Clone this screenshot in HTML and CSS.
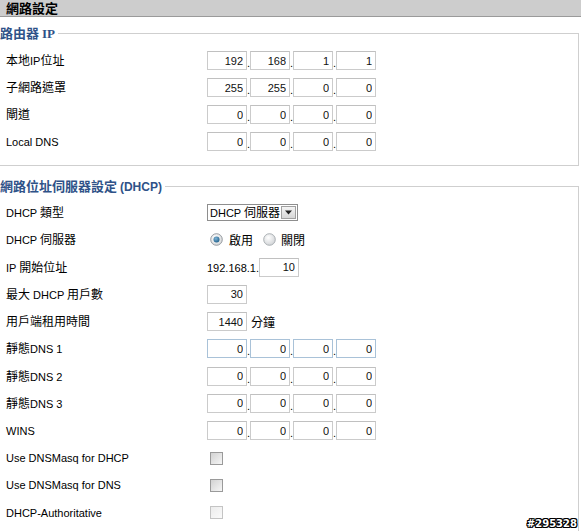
FILE: index.html
```html
<!DOCTYPE html>
<html>
<head>
<meta charset="utf-8">
<link rel="stylesheet" href="styles.css">
</head>
<body>
<div class="header"><span class="title">網路設定</span></div>

<fieldset class="group g1">
  <legend>路由器 <span class="serif">IP</span></legend>
  <div class="row"><div class="label"><span class="zh">本地</span>IP<span class="zh">位址</span></div>
    <div class="ip"><input class="box" value="192"><span class="dot">.</span><input class="box" value="168"><span class="dot">.</span><input class="box" value="1"><span class="dot">.</span><input class="box" value="1"></div></div>
  <div class="row"><div class="label"><span class="zh">子網路遮罩</span></div>
    <div class="ip"><input class="box" value="255"><span class="dot">.</span><input class="box" value="255"><span class="dot">.</span><input class="box" value="0"><span class="dot">.</span><input class="box" value="0"></div></div>
  <div class="row"><div class="label"><span class="zh">閘道</span></div>
    <div class="ip"><input class="box" value="0"><span class="dot">.</span><input class="box" value="0"><span class="dot">.</span><input class="box" value="0"><span class="dot">.</span><input class="box" value="0"></div></div>
  <div class="row"><div class="label">Local DNS</div>
    <div class="ip"><input class="box" value="0"><span class="dot">.</span><input class="box" value="0"><span class="dot">.</span><input class="box" value="0"><span class="dot">.</span><input class="box" value="0"></div></div>
</fieldset>

<fieldset class="group g2">
  <legend>網路位址伺服器設定 <span class="paren">(DHCP)</span></legend>
  <div class="row"><div class="label">DHCP <span class="zh">類型</span></div>
    <div class="select"><span class="sel-text">DHCP <span class="zh">伺服器</span></span><span class="sel-btn"><svg width="9" height="5" viewBox="0 0 9 5"><path d="M1 0.5h7L4.5 4.5z" fill="#222"/></svg></span></div></div>
  <div class="row"><div class="label">DHCP <span class="zh">伺服器</span></div>
    <div class="radios">
      <svg class="radio" width="13" height="13" viewBox="0 0 13 13"><defs><radialGradient id="rg1" cx="0.4" cy="0.35" r="0.7"><stop offset="0" stop-color="#ffffff"/><stop offset="1" stop-color="#d4d6d8"/></radialGradient><radialGradient id="rd" cx="0.4" cy="0.35" r="0.7"><stop offset="0" stop-color="#7fb4d6"/><stop offset="1" stop-color="#1e5f8a"/></radialGradient></defs><circle cx="6.5" cy="6.5" r="5.8" fill="url(#rg1)" stroke="#8b9197" stroke-width="0.9"/><circle cx="6.5" cy="6.5" r="3" fill="url(#rd)"/></svg>
      <span class="zh rtext">啟用</span>
      <svg class="radio r2" width="13" height="13" viewBox="0 0 13 13"><defs><radialGradient id="rg2" cx="0.4" cy="0.35" r="0.7"><stop offset="0" stop-color="#ffffff"/><stop offset="1" stop-color="#cfd2d5"/></radialGradient></defs><circle cx="6.5" cy="6.5" r="5.8" fill="url(#rg2)" stroke="#a3a8ad" stroke-width="0.9"/></svg>
      <span class="zh rtext">關閉</span>
    </div></div>
  <div class="row"><div class="label">IP <span class="zh">開始位址</span></div>
    <div class="ip"><span class="prefix">192.168.1.</span><input class="box" value="10"></div></div>
  <div class="row"><div class="label"><span class="zh">最大</span> DHCP <span class="zh">用戶數</span></div>
    <div class="ip"><input class="box" value="30"></div></div>
  <div class="row"><div class="label"><span class="zh">用戶端租用時間</span></div>
    <div class="ip"><input class="box" value="1440"><span class="zh unit">分鐘</span></div></div>
  <div class="row"><div class="label"><span class="zh">靜態</span>DNS 1</div>
    <div class="ip focus"><input class="box" value="0"><span class="dot">.</span><input class="box" value="0"><span class="dot">.</span><input class="box" value="0"><span class="dot">.</span><input class="box" value="0"></div></div>
  <div class="row"><div class="label"><span class="zh">靜態</span>DNS 2</div>
    <div class="ip"><input class="box" value="0"><span class="dot">.</span><input class="box" value="0"><span class="dot">.</span><input class="box" value="0"><span class="dot">.</span><input class="box" value="0"></div></div>
  <div class="row"><div class="label"><span class="zh">靜態</span>DNS 3</div>
    <div class="ip"><input class="box" value="0"><span class="dot">.</span><input class="box" value="0"><span class="dot">.</span><input class="box" value="0"><span class="dot">.</span><input class="box" value="0"></div></div>
  <div class="row"><div class="label">WINS</div>
    <div class="ip"><input class="box" value="0"><span class="dot">.</span><input class="box" value="0"><span class="dot">.</span><input class="box" value="0"><span class="dot">.</span><input class="box" value="0"></div></div>
  <div class="row"><div class="label">Use DNSMasq for DHCP</div><span class="check"></span></div>
  <div class="row"><div class="label">Use DNSMasq for DNS</div><span class="check"></span></div>
  <div class="row"><div class="label">DHCP-Authoritative</div><span class="check disabled"></span></div>
</fieldset>

<div class="watermark">#295328</div>
</body>
</html>
```

FILE: styles.css
```css
html, body {
  margin: 0;
  padding: 0;
}
body {
  width: 581px;
  height: 531px;
  overflow: hidden;
  position: relative;
  background: #fff;
  color: #000;
  font-family: "Liberation Sans", "Noto Sans CJK TC", sans-serif;
  font-size: 11px;
}
.zh {
  font-family: "Noto Sans CJK TC", sans-serif;
  font-size: 12px;
}
.header {
  box-sizing: border-box;
  height: 17px;
  background: #cdcdcd;
  border-bottom: 1px solid #9a9a9a;
  padding-left: 6px;
  display: flex;
  align-items: center;
}
.title {
  font-family: "Noto Sans CJK TC", sans-serif;
  font-weight: bold;
  font-size: 13px;
  line-height: 14px;
}
.group {
  margin: 9px 2px 0 -1px;
  border: 1px solid #cfcfcf;
  padding: 6px 0 10px 0;
  min-width: 0;
}
.group legend {
  padding: 0 3px 0 0;
  margin: 0;
  line-height: 14px;
  font-family: "Noto Sans CJK TC", sans-serif;
  font-size: 13px;
  font-weight: bold;
  color: #2f5288;
}
.serif {
  font-family: "Liberation Serif", serif;
  font-size: 13px;
}
.paren {
  font-family: "Liberation Sans", sans-serif;
  font-size: 12px;
}
.g2 {
  margin-top: 13px;
  padding-top: 5px;
  padding-bottom: 40px;
}
.row {
  display: flex;
  align-items: center;
  height: 27px;
  padding-left: 6px;
}
.g2 .row {
  height: 27.27px;
}
.label {
  width: 201px;
  flex: none;
  white-space: nowrap;
  line-height: 14px;
}
.ip {
  display: flex;
  align-items: flex-end;
}
.box {
  box-sizing: border-box;
  width: 40px;
  height: 19px;
  margin: 0;
  padding: 0 3px 0 0;
  border: 1px solid #cbcbcb;
  border-top-color: #c0c0c0;
  background: #fff;
  text-align: right;
  font-family: "Liberation Sans", sans-serif;
  font-size: 11px;
  color: #111;
  outline: none;
}
.ip.focus .box {
  border: 1px solid #a9c2d8;
}
.dot {
  width: 3px;
  line-height: 13px;
  font-size: 11px;
}
.prefix {
  line-height: 17px;
  margin-right: 1px;
  width: 51px;
}
.unit {
  margin-left: 4px;
  line-height: 18px;
}
.select {
  display: flex;
  align-items: center;
  box-sizing: border-box;
  width: 91px;
  height: 17px;
  border: 1px solid #8e8e8e;
  background: #fff;
  padding: 0 1px 0 2px;
}
.sel-text {
  flex: 1;
  line-height: 14px;
  white-space: nowrap;
}
.sel-btn {
  box-sizing: border-box;
  width: 15px;
  height: 13px;
  border: 1px solid #a0a0a0;
  background: linear-gradient(#f4f4f4, #d6d6d6);
  display: flex;
  align-items: center;
  justify-content: center;
}
.radios {
  display: flex;
  align-items: center;
  padding-left: 3px;
}
.radio {
  display: block;
  flex: none;
}
.rtext {
  margin-left: 6px;
  line-height: 14px;
}
.r2 {
  margin-left: 10px;
}
.radios .rtext:last-child {
  margin-left: 5px;
}
.check {
  display: block;
  box-sizing: border-box;
  width: 13px;
  height: 13px;
  margin-left: 3px;
  border: 1px solid #9a9a9a;
  background: linear-gradient(135deg, #d2d2d2, #f6f6f6);
}
.check.disabled {
  border-color: #c4c4c4;
  background: linear-gradient(135deg, #ececec, #fafafa);
}
.watermark {
  position: absolute;
  right: 4px;
  bottom: 2px;
  font-family: "DejaVu Sans", sans-serif;
  font-weight: bold;
  font-size: 10px;
  line-height: 11px;
  color: #fff;
  text-shadow: -1px 0 #000, 1px 0 #000, 0 -1px #000, 0 1px #000, -1px -1px #000, 1px 1px #000, -1px 1px #000, 1px -1px #000;
}
```
